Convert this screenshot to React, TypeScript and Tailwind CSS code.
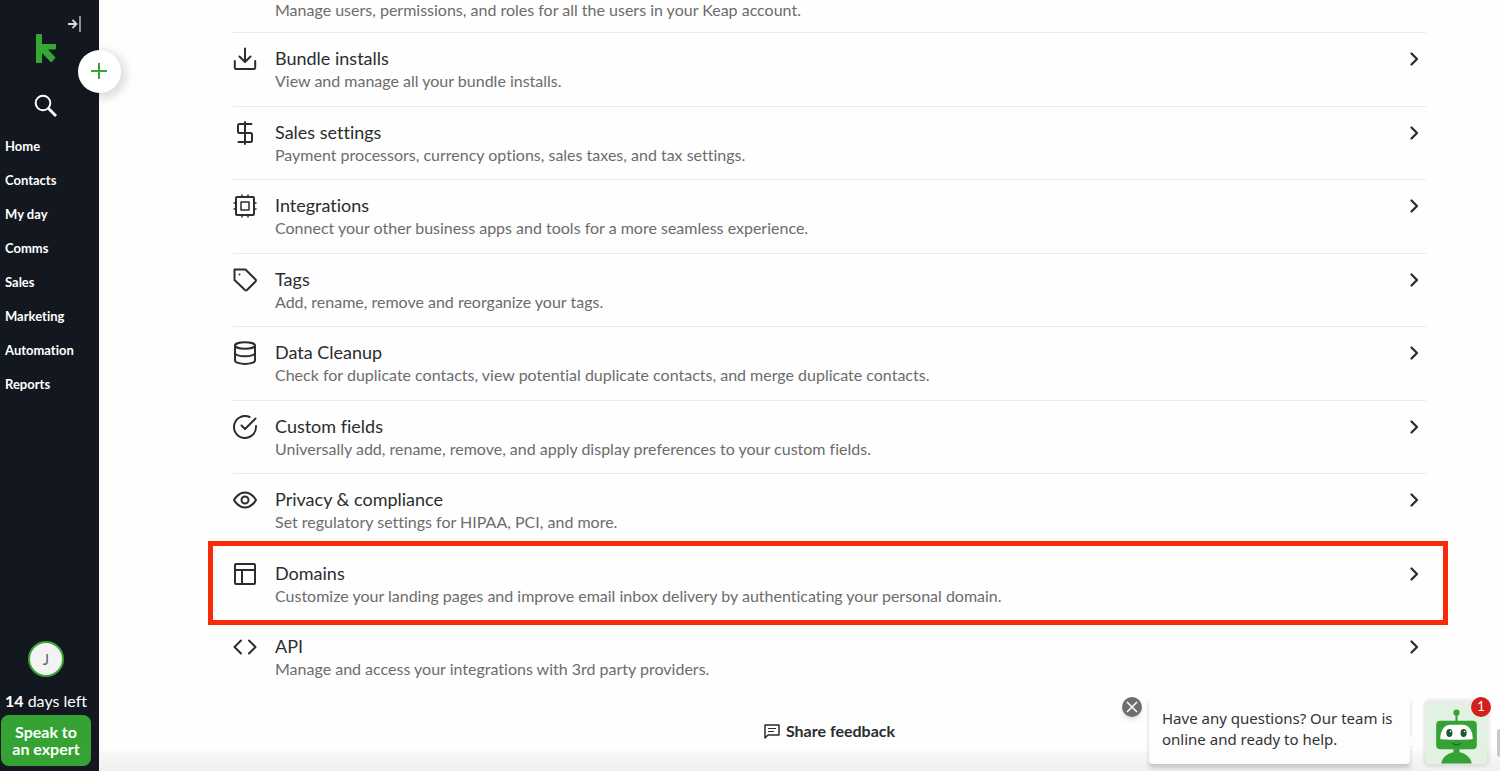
import type { ReactNode } from "react";

type Setting = {
  title: string;
  description: string;
  icon: ReactNode;
  highlighted?: boolean;
  divider?: boolean;
};

const navItems = ["Home", "Contacts", "My day", "Comms", "Sales", "Marketing", "Automation", "Reports"];

function Icon({ children }: { children: ReactNode }) {
  return (
    <svg
      className="w-6 h-6 shrink-0"
      viewBox="0 0 24 24"
      fill="none"
      stroke="currentColor"
      strokeWidth="2"
      strokeLinecap="round"
      strokeLinejoin="round"
      aria-hidden="true"
    >
      {children}
    </svg>
  );
}

const settings: Setting[] = [
  {
    title: "Bundle installs",
    description: "View and manage all your bundle installs.",
    divider: true,
    icon: (
      <Icon>
        <path d="M12 1.500v13M6.500 9.500l5.500 5.500 5.500-5.500M1.800 14v6.500a1.500 1.500 0 0 0 1.500 1.500h17.400a1.500 1.500 0 0 0 1.500-1.500V14" />
      </Icon>
    ),
  },
  {
    title: "Sales settings",
    description: "Payment processors, currency options, sales taxes, and tax settings.",
    divider: true,
    icon: (
      <Icon>
        <path d="M12 1v22M18.500 3H6.500a1.500 1.500 0 0 0-1.500 1.500v6A1.500 1.500 0 0 0 6.500 12h11a1.500 1.500 0 0 1 1.500 1.500v6a1.500 1.500 0 0 1-1.500 1.500H5.500" />
      </Icon>
    ),
  },
  {
    title: "Integrations",
    description: "Connect your other business apps and tools for a more seamless experience.",
    divider: true,
    icon: (
      <Icon>
        <rect x="3" y="3" width="18" height="18" rx="1" />
        <rect x="8" y="8" width="8" height="8" strokeWidth="1.500" />
        <path
          strokeWidth="1.500"
          d="M9 1v2M15 1v2M9 21v2M15 21v2M1 9h2M1 15h2M21 9h2M21 15h2"
        />
      </Icon>
    ),
  },
  {
    title: "Tags",
    description: "Add, rename, remove and reorganize your tags.",
    divider: true,
    icon: (
      <Icon>
        <path d="M1.500 1.500h11l10 10a1.500 1.500 0 0 1 0 2l-8.500 8.500a1.500 1.500 0 0 1-2 0L1.500 12z" />
        <path d="M6.500 6.500h.01" />
      </Icon>
    ),
  },
  {
    title: "Data Cleanup",
    description: "Check for duplicate contacts, view potential duplicate contacts, and merge duplicate contacts.",
    divider: true,
    icon: (
      <Icon>
        <ellipse cx="12" cy="4.500" rx="10" ry="3.200" />
        <path d="M2 4.500v15C2 21.300 6.500 23 12 23s10-1.700 10-3.500v-15M2 12c0 1.800 4.500 3.300 10 3.300s10-1.500 10-3.300" />
      </Icon>
    ),
  },
  {
    title: "Custom fields",
    description: "Universally add, rename, remove, and apply display preferences to your custom fields.",
    divider: true,
    icon: (
      <Icon>
        <path d="M23 11v1A11 11 0 1 1 16.500 2M22.500 3.500L12 14l-3.500-3.500" />
      </Icon>
    ),
  },
  {
    title: "Privacy & compliance",
    description: "Set regulatory settings for HIPAA, PCI, and more.",
    divider: true,
    icon: (
      <Icon>
        <path d="M1 12s4-7.500 11-7.500S23 12 23 12s-4 7.500-11 7.500S1 12 1 12z" />
        <circle cx="12" cy="12" r="3.500" />
      </Icon>
    ),
  },
  {
    title: "Domains",
    description: "Customize your landing pages and improve email inbox delivery by authenticating your personal domain.",
    highlighted: true,
    icon: (
      <Icon>
        <rect x="2" y="2" width="20" height="20" rx="1" />
        <path d="M2 8h20M9 8v14" />
      </Icon>
    ),
  },
  {
    title: "API",
    description: "Manage and access your integrations with 3rd party providers.",
    icon: (
      <Icon>
        <path d="M8 5.500L1.500 12 8 18.500M16 5.500l6.500 6.500-6.500 6.500" />
      </Icon>
    ),
  },
];

function Sidebar() {
  return (
    <aside className="relative z-10 flex w-[99px] shrink-0 flex-col bg-[#131820] text-white">
      <div className="flex h-[34px] items-end justify-end pr-4">
        <button aria-label="Collapse menu" className="text-[#d5d7da]">
          <svg className="h-5 w-4" viewBox="0 0 16 20" fill="none" stroke="currentColor" strokeWidth="1.800">
            <path d="M1 10h8M5.500 6l4 4-4 4" />
            <path d="M13 2v16" stroke="#999da3" />
          </svg>
        </button>
      </div>
      <a href="#" aria-label="Keap" className="ml-9 w-5">
        <svg className="h-[29px] w-5" viewBox="0 0 20 29" fill="#36a635">
          <path d="M1 0h4a1 1 0 0 1 1 1v9h13a1 1 0 0 1 1 1v3.500a1 1 0 0 1-1 1h-7l7 7.500a1 1 0 0 1 0 1.500l-3 3.200a1 1 0 0 1-1.500 0L6 19v9a1 1 0 0 1-1 1H1a1 1 0 0 1-1-1V1a1 1 0 0 1 1-1z" />
        </svg>
      </a>
      <button aria-label="Search" className="mt-[31px] ml-[34px] w-6">
        <svg className="h-6 w-6" viewBox="0 0 24 24" fill="none" stroke="white" strokeWidth="2">
          <circle cx="9" cy="9" r="7.300" />
          <path d="M14.500 14.500L22 22" strokeWidth="2.800" />
        </svg>
      </button>
      <nav className="mt-3 flex flex-col">
        {navItems.map((item) => (
          <a key={item} href="#" className="flex h-[34px] items-center pl-[5px] text-[13px] font-bold">
            {item}
          </a>
        ))}
      </nav>
      <div className="mt-auto flex flex-col pb-[5px]">
        <button
          aria-label="Account J"
          className="ml-7 flex h-9 w-9 items-center justify-center rounded-full border-2 border-[#36a635] bg-[#f3f3f3] text-[15px] text-[#666]"
        >
          J
        </button>
        <p className="mt-3.5 pl-[5px] text-base leading-5 whitespace-nowrap">
          <strong>14</strong> days left
        </p>
        <button className="mt-1 ml-px w-[90px] rounded-lg bg-[#34a333] pt-2 pb-[9px] text-base leading-[17px] font-bold whitespace-nowrap">
          Speak to
          <br />
          an expert
        </button>
      </div>
      <button
        aria-label="Add new"
        className="absolute top-[50px] -right-[22px] flex h-[43px] w-[43px] items-center justify-center rounded-full bg-white text-[#36a635] shadow-[3px_3px_9px_3px_rgba(0,0,0,0.12)]"
      >
        <svg className="h-[17px] w-[17px]" viewBox="0 0 17 17" stroke="currentColor" strokeWidth="2">
          <path d="M8 0v16M0 8h16" />
        </svg>
      </button>
    </aside>
  );
}

function SettingRow({ title, description, icon, highlighted, divider }: Setting) {
  return (
    <li className={divider ? "relative border-t border-[#e9e9e9]" : "relative border-t border-transparent"}>
      <a href="#" className="flex h-full items-start gap-[18px] pt-3.5 pr-1">
        {icon}
        <span className="flex min-w-0 flex-1 flex-col">
          <span className="text-lg leading-[22px]">{title}</span>
          <span className="text-base leading-6 text-[#6c6c6c]">{description}</span>
        </span>
        <svg className="mt-1 h-4 w-4 shrink-0" viewBox="0 0 16 16" fill="none" stroke="currentColor" strokeWidth="2.300">
          <path d="M5.500 2.500L11 8l-5.500 5.500" strokeLinecap="round" strokeLinejoin="round" />
        </svg>
      </a>
      {highlighted && (
        <div className="pointer-events-none absolute -top-[7px] -right-[22px] -bottom-[5px] -left-[25px] border-[5px] border-[#f72b08]" />
      )}
    </li>
  );
}

function Robot() {
  return (
    <svg className="h-full w-full" viewBox="0 0 60 60">
      <g fill="#34a333">
        <circle cx="30" cy="10" r="3" />
        <path d="M29 10h2v10h-2z" />
        <rect x="10" y="18" width="40" height="28" rx="4" />
        <path d="M27 45h6v4c6 1 11 5 12 11H15c1-6 6-10 12-11z" />
      </g>
      <path d="M14 36c0-8 4-14 10-14h12c6 0 10 6 10 14-3 1-29 1-32 0z" fill="white" />
      <g fill="#1d5b2d">
        <ellipse cx="23" cy="30" rx="3" ry="4" />
        <ellipse cx="37" cy="30" rx="3" ry="4" />
      </g>
      <circle cx="24" cy="28.500" r="0.800" fill="white" />
      <circle cx="38" cy="28.500" r="0.800" fill="white" />
      <path d="M26 40q4 3.500 8 0" fill="none" stroke="#1d6b2a" strokeWidth="1.200" />
    </svg>
  );
}

function ChatPrompt() {
  return (
    <div className="absolute right-0 bottom-[7px] flex items-start">
      <button aria-label="Close message" className="mr-[7px] h-5 w-5 rounded-full bg-[#6e6e6e] text-white shadow-md">
        <svg className="h-5 w-5" viewBox="0 0 20 20" stroke="currentColor" strokeWidth="1.500">
          <path d="M5 5l10 10M15 5L5 15" />
        </svg>
      </button>
      <div className="relative mr-4 h-[67px] w-[261px] rounded-sm bg-[#fdfdfd] pt-[11px] pl-[13px] font-['Noto_Sans',sans-serif] text-[15px] leading-[21px] text-[#333] shadow-[0_4px_4px_0_rgba(0,0,0,0.18)]">
        Have any questions? Our team is
        <br />
        online and ready to help.
        <span className="absolute top-10 -right-1 h-2 w-2 rotate-45 bg-[#fdfdfd]" />
      </div>
      <button
        aria-label="Open chat"
        className="relative mt-[5px] h-[62px] w-[61px] rounded bg-[#e1f1e2] shadow-[0_0_3px_3px_rgba(0,0,0,0.08)]"
      >
        <Robot />
        <span className="absolute -top-[5px] -right-1 flex h-5 w-5 items-center justify-center rounded-full bg-[#d4201d] text-[13px] text-white">
          1
        </span>
      </button>
      <span className="mt-8 ml-2.5 h-7 w-[3px] rounded-l bg-[#c9c9c9]" />
    </div>
  );
}

export default function App() {
  return (
    <div className="relative flex min-h-screen overflow-hidden bg-[#fefefe] font-[Lato,sans-serif] text-[#2b2d2f] [font-variant-ligatures:none]">
      <Sidebar />
      <main className="flex min-w-0 flex-1 flex-col pr-[74px] pl-[134px]">
        <p className="h-8 pl-[42px] text-base leading-5 text-[#6c6c6c]">
          Manage users, permissions, and roles for all the users in your Keap account.
        </p>
        <ul className="grid min-h-[662px] auto-rows-fr">
          {settings.map((setting) => (
            <SettingRow key={setting.title} {...setting} />
          ))}
        </ul>
        <button className="mt-[25px] flex items-center gap-1.5 self-center text-base leading-6 font-bold">
          <svg className="h-4 w-4" viewBox="0 0 16 16" fill="none" stroke="currentColor" strokeWidth="1.500">
            <path d="M1 15V2h14v10H4z" strokeLinejoin="round" />
            <path d="M4 5.500h8M4 8.500h6" strokeWidth="1" />
          </svg>
          Share feedback
        </button>
      </main>
      <div className="pointer-events-none absolute right-0 bottom-0 left-[99px] h-5 bg-linear-to-b from-[#f9f9f9] to-[#efefef]" />
      <ChatPrompt />
    </div>
  );
}
